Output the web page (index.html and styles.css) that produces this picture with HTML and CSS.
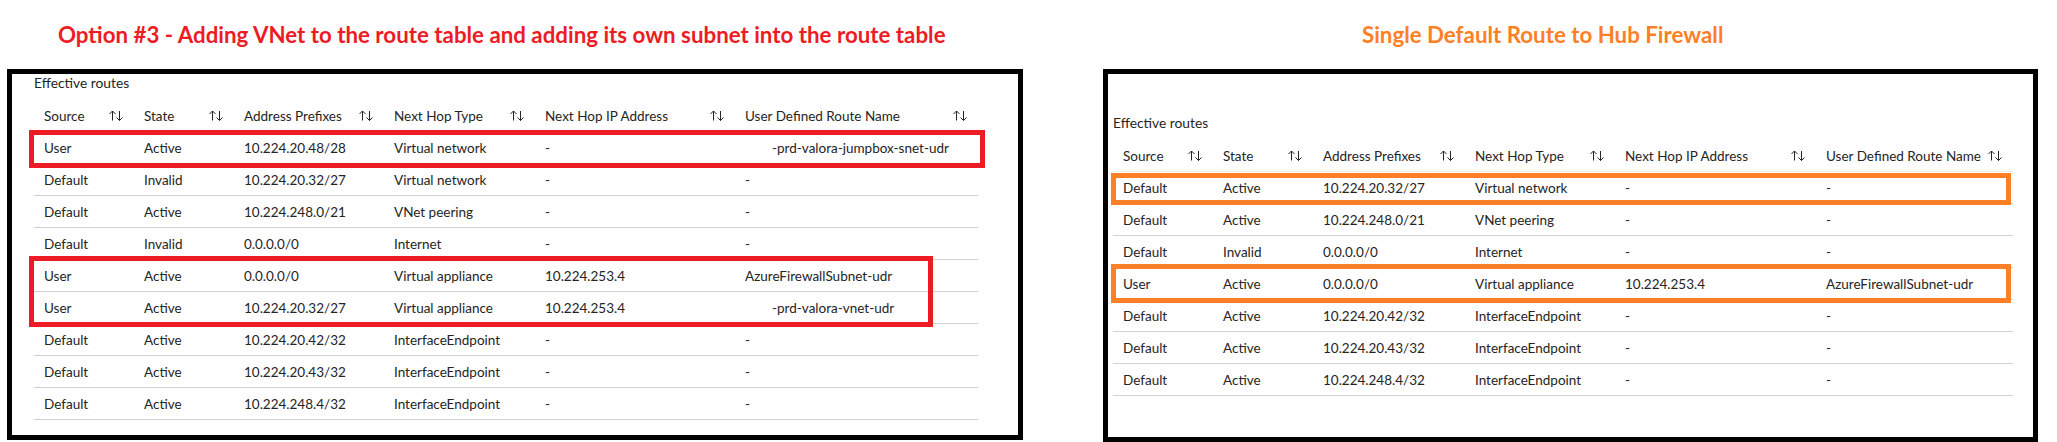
FILE: index.html
```html
<!DOCTYPE html>
<html lang="en">
<head>
<meta charset="utf-8">
<title>Effective routes comparison</title>
<link rel="stylesheet" href="styles.css">
</head>
<body>
<div class="page">
  <section class="panel panel-left">
    <h2 class="title title-red">Option #3 - Adding VNet to the route table and adding its own subnet into the route table</h2>
    <div class="frame frame-left">
      <div class="caption">Effective routes</div>
      <div class="grid grid-left">
        <div class="row head">
          <div class="cell">Source<svg class="sort" viewBox="0 0 17 11"><path d="M4.5 10.5V1M1.5 4L4.5 1L7.5 4M11.5 1V10.5M8.5 7.5L11.5 10.5L14.5 7.5"/></svg></div>
          <div class="cell">State<svg class="sort" viewBox="0 0 17 11"><path d="M4.5 10.5V1M1.5 4L4.5 1L7.5 4M11.5 1V10.5M8.5 7.5L11.5 10.5L14.5 7.5"/></svg></div>
          <div class="cell">Address Prefixes<svg class="sort" viewBox="0 0 17 11"><path d="M4.5 10.5V1M1.5 4L4.5 1L7.5 4M11.5 1V10.5M8.5 7.5L11.5 10.5L14.5 7.5"/></svg></div>
          <div class="cell">Next Hop Type<svg class="sort" viewBox="0 0 17 11"><path d="M4.5 10.5V1M1.5 4L4.5 1L7.5 4M11.5 1V10.5M8.5 7.5L11.5 10.5L14.5 7.5"/></svg></div>
          <div class="cell">Next Hop IP Address<svg class="sort" viewBox="0 0 17 11"><path d="M4.5 10.5V1M1.5 4L4.5 1L7.5 4M11.5 1V10.5M8.5 7.5L11.5 10.5L14.5 7.5"/></svg></div>
          <div class="cell">User Defined Route Name<svg class="sort" viewBox="0 0 17 11"><path d="M4.5 10.5V1M1.5 4L4.5 1L7.5 4M11.5 1V10.5M8.5 7.5L11.5 10.5L14.5 7.5"/></svg></div>
        </div>
        <div class="row"><div class="cell">User</div><div class="cell">Active</div><div class="cell">10.224.20.48/28</div><div class="cell">Virtual network</div><div class="cell">-</div><div class="cell redacted">-prd-valora-jumpbox-snet-udr</div></div>
        <div class="row"><div class="cell">Default</div><div class="cell">Invalid</div><div class="cell">10.224.20.32/27</div><div class="cell">Virtual network</div><div class="cell">-</div><div class="cell">-</div></div>
        <div class="row"><div class="cell">Default</div><div class="cell">Active</div><div class="cell">10.224.248.0/21</div><div class="cell">VNet peering</div><div class="cell">-</div><div class="cell">-</div></div>
        <div class="row"><div class="cell">Default</div><div class="cell">Invalid</div><div class="cell">0.0.0.0/0</div><div class="cell">Internet</div><div class="cell">-</div><div class="cell">-</div></div>
        <div class="row"><div class="cell">User</div><div class="cell">Active</div><div class="cell">0.0.0.0/0</div><div class="cell">Virtual appliance</div><div class="cell">10.224.253.4</div><div class="cell">AzureFirewallSubnet-udr</div></div>
        <div class="row"><div class="cell">User</div><div class="cell">Active</div><div class="cell">10.224.20.32/27</div><div class="cell">Virtual appliance</div><div class="cell">10.224.253.4</div><div class="cell redacted">-prd-valora-vnet-udr</div></div>
        <div class="row"><div class="cell">Default</div><div class="cell">Active</div><div class="cell">10.224.20.42/32</div><div class="cell">InterfaceEndpoint</div><div class="cell">-</div><div class="cell">-</div></div>
        <div class="row"><div class="cell">Default</div><div class="cell">Active</div><div class="cell">10.224.20.43/32</div><div class="cell">InterfaceEndpoint</div><div class="cell">-</div><div class="cell">-</div></div>
        <div class="row"><div class="cell">Default</div><div class="cell">Active</div><div class="cell">10.224.248.4/32</div><div class="cell">InterfaceEndpoint</div><div class="cell">-</div><div class="cell">-</div></div>
      </div>
      <div class="mark mark-red mark-l1"></div>
      <div class="mark mark-red mark-l2"></div>
    </div>
  </section>

  <section class="panel panel-right">
    <h2 class="title title-orange">Single Default Route to Hub Firewall</h2>
    <div class="frame frame-right">
      <div class="caption">Effective routes</div>
      <div class="grid grid-right">
        <div class="row head">
          <div class="cell">Source<svg class="sort" viewBox="0 0 17 11"><path d="M4.5 10.5V1M1.5 4L4.5 1L7.5 4M11.5 1V10.5M8.5 7.5L11.5 10.5L14.5 7.5"/></svg></div>
          <div class="cell">State<svg class="sort" viewBox="0 0 17 11"><path d="M4.5 10.5V1M1.5 4L4.5 1L7.5 4M11.5 1V10.5M8.5 7.5L11.5 10.5L14.5 7.5"/></svg></div>
          <div class="cell">Address Prefixes<svg class="sort" viewBox="0 0 17 11"><path d="M4.5 10.5V1M1.5 4L4.5 1L7.5 4M11.5 1V10.5M8.5 7.5L11.5 10.5L14.5 7.5"/></svg></div>
          <div class="cell">Next Hop Type<svg class="sort" viewBox="0 0 17 11"><path d="M4.5 10.5V1M1.5 4L4.5 1L7.5 4M11.5 1V10.5M8.5 7.5L11.5 10.5L14.5 7.5"/></svg></div>
          <div class="cell">Next Hop IP Address<svg class="sort" viewBox="0 0 17 11"><path d="M4.5 10.5V1M1.5 4L4.5 1L7.5 4M11.5 1V10.5M8.5 7.5L11.5 10.5L14.5 7.5"/></svg></div>
          <div class="cell">User Defined Route Name<svg class="sort" viewBox="0 0 17 11"><path d="M4.5 10.5V1M1.5 4L4.5 1L7.5 4M11.5 1V10.5M8.5 7.5L11.5 10.5L14.5 7.5"/></svg></div>
        </div>
        <div class="row"><div class="cell">Default</div><div class="cell">Active</div><div class="cell">10.224.20.32/27</div><div class="cell">Virtual network</div><div class="cell">-</div><div class="cell">-</div></div>
        <div class="row"><div class="cell">Default</div><div class="cell">Active</div><div class="cell">10.224.248.0/21</div><div class="cell">VNet peering</div><div class="cell">-</div><div class="cell">-</div></div>
        <div class="row"><div class="cell">Default</div><div class="cell">Invalid</div><div class="cell">0.0.0.0/0</div><div class="cell">Internet</div><div class="cell">-</div><div class="cell">-</div></div>
        <div class="row"><div class="cell">User</div><div class="cell">Active</div><div class="cell">0.0.0.0/0</div><div class="cell">Virtual appliance</div><div class="cell">10.224.253.4</div><div class="cell">AzureFirewallSubnet-udr</div></div>
        <div class="row"><div class="cell">Default</div><div class="cell">Active</div><div class="cell">10.224.20.42/32</div><div class="cell">InterfaceEndpoint</div><div class="cell">-</div><div class="cell">-</div></div>
        <div class="row"><div class="cell">Default</div><div class="cell">Active</div><div class="cell">10.224.20.43/32</div><div class="cell">InterfaceEndpoint</div><div class="cell">-</div><div class="cell">-</div></div>
        <div class="row"><div class="cell">Default</div><div class="cell">Active</div><div class="cell">10.224.248.4/32</div><div class="cell">InterfaceEndpoint</div><div class="cell">-</div><div class="cell">-</div></div>
      </div>
      <div class="mark mark-orange mark-r1"></div>
      <div class="mark mark-orange mark-r2"></div>
    </div>
  </section>
</div>
</body>
</html>
```

FILE: styles.css
```css
html, body {
  margin: 0;
  padding: 0;
  background: #ffffff;
}

.page {
  display: flex;
  gap: 80px;
  padding-left: 7px;
  width: 2057px;
  height: 442px;
  box-sizing: border-box;
  font-family: "Lato", "Open Sans", sans-serif;
  color: #252423;
}

.panel {
  display: flex;
  flex-direction: column;
}

.panel-left { width: 1016px; }
.panel-right { width: 935px; }

.title {
  margin: 0;
  height: 69px;
  box-sizing: border-box;
  padding-top: 23px;
  font-family: "Lato", "Open Sans", sans-serif;
  font-weight: 700;
  font-size: 22.3px;
  line-height: 24px;
  white-space: nowrap;
}

.title-red { color: #ed1c24; padding-left: 51px; }
.title-orange { color: #ff7f27; padding-left: 259px; }

.frame {
  position: relative;
  border: 5px solid #000000;
  box-sizing: border-box;
  background: #ffffff;
}

.frame-left {
  height: 371px;
  padding: 0 0 0 22px;
}

.frame-right {
  height: 373px;
  padding: 40px 0 0 5px;
}

.caption {
  font-size: 13.8px;
  line-height: 18px;
  height: 18px;
  margin-bottom: 8px;
  white-space: nowrap;
}

.row {
  display: grid;
  height: 32px;
  box-sizing: border-box;
  border-bottom: 1px solid #d2d0ce;
  align-items: center;
  font-size: 13.5px;
}

.grid-left .row { width: 944px; grid-template-columns: 100px 100px 150px 151px 200px 243px; }
.grid-right .row { width: 900px; grid-template-columns: 100px 100px 152px 150px 201px 197px; }

.row.head { border-bottom-color: #edebe9; }

.cell {
  padding: 0 9px 0 10px;
  white-space: nowrap;
  display: flex;
  align-items: center;
  justify-content: space-between;
}

.cell.redacted { padding-left: 37px; }

.sort {
  width: 17px;
  height: 11px;
  flex: none;
  fill: none;
  stroke: #252423;
  stroke-width: 1;
}

.mark {
  position: absolute;
  box-sizing: border-box;
  border-width: 5px;
  border-style: solid;
}

.mark-red { border-color: #ed1c24; }
.mark-orange { border-color: #ff7f27; }

.mark-l1 { left: 17px; top: 56px; width: 956px; height: 38px; }
.mark-l2 { left: 17px; top: 182px; width: 904px; height: 71px; }
.mark-r1 { left: 3px; top: 99px; width: 900px; height: 32px; }
.mark-r2 { left: 3px; top: 190px; width: 900px; height: 39px; }
```
